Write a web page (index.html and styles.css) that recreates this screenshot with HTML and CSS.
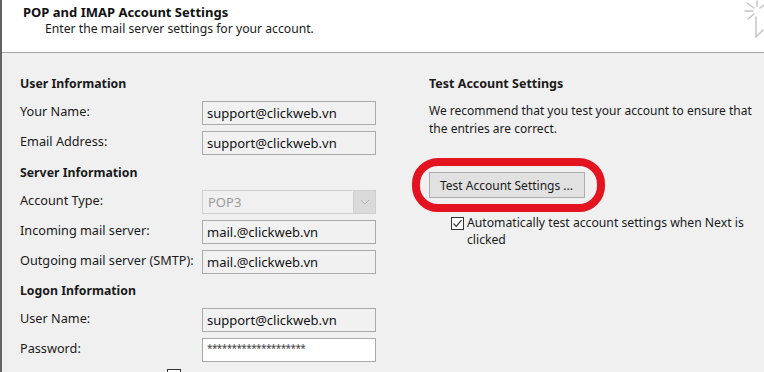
FILE: index.html
```html
<!DOCTYPE html>
<html>
<head>
<meta charset="utf-8">
<link rel="stylesheet" href="styles.css">
</head>
<body>
<div class="window">
  <div class="header">
    <div class="title">POP and IMAP Account Settings</div>
    <div class="subtitle">Enter the mail server settings for your account.</div>
    <svg class="busy" width="24" height="40" viewBox="0 0 24 40">
      <g stroke="#c4c4c4" stroke-width="1.5" fill="none" stroke-linecap="round">
        <line x1="14" y1="8" x2="7" y2="3"/>
        <line x1="13" y1="11" x2="5" y2="11"/>
        <line x1="14" y1="14" x2="8" y2="19"/>
        <line x1="17" y1="6" x2="17" y2="1"/>
        <line x1="20" y1="8" x2="24" y2="5"/>
        <line x1="16" y1="17" x2="16" y2="37"/>
        <line x1="16" y1="37" x2="23" y2="30"/>
      </g>
    </svg>
  </div>
  <div class="content">
    <div class="left">
      <div class="section">User Information</div>
      <div class="row"><span class="label">Your Name:</span><span class="field">support@clickweb.vn</span></div>
      <div class="row"><span class="label">Email Address:</span><span class="field">support@clickweb.vn</span></div>
      <div class="section">Server Information</div>
      <div class="row"><span class="label">Account Type:</span><span class="field select"><span class="sel-text">POP3</span><span class="sel-btn"><svg width="10" height="6" viewBox="0 0 10 6"><path d="M1 1 L5 5 L9 1" stroke="#b4b4b4" stroke-width="1" fill="none"/></svg></span></span></div>
      <div class="row"><span class="label">Incoming mail server:</span><span class="field">mail.@clickweb.vn</span></div>
      <div class="row"><span class="label">Outgoing mail server (SMTP):</span><span class="field">mail.@clickweb.vn</span></div>
      <div class="section logon">Logon Information</div>
      <div class="row"><span class="label">User Name:</span><span class="field">support@clickweb.vn</span></div>
      <div class="row"><span class="label">Password:</span><span class="field pw">********************</span></div>
      <div class="remember"><span class="box"></span></div>
    </div>
    <div class="right">
      <div class="section">Test Account Settings</div>
      <p class="desc">We recommend that you test your account to ensure that the entries are correct.</p>
      <div class="btn-wrap"><span class="btn">Test Account Settings ...</span></div>
      <div class="check-row">
        <span class="check"><svg width="13" height="13" viewBox="0 0 13 13"><path d="M2.5 6.5 L5.2 9.3 L10.5 3.2" stroke="#333" stroke-width="1.2" fill="none"/></svg></span>
        <span class="check-text">Automatically test account settings when Next is clicked</span>
      </div>
    </div>
  </div>
</div>
</body>
</html>
```
FILE: styles.css
```css
html, body {
  margin: 0;
  padding: 0;
}
body {
  width: 764px;
  height: 372px;
  overflow: hidden;
  background: #f0f0f0;
  font-family: "Noto Sans", "Open Sans", sans-serif;
  font-size: 12.5px;
  color: #1a1a1a;
}
.window {
  height: 372px;
  border-left: 2px solid #626262;
  box-sizing: border-box;
}
.header {
  position: relative;
  height: 52px;
  background: #ffffff;
  border-bottom: 1px solid #a5a5a5;
  box-sizing: content-box;
}
.title {
  padding: 3px 0 0 21px;
  font-weight: bold;
  font-size: 13px;
  line-height: 18px;
  color: #111;
}
.subtitle {
  padding-left: 43px;
  font-size: 12.2px;
  line-height: 16px;
}
.busy {
  position: absolute;
  right: 0;
  top: 0;
}
.content {
  display: flex;
  padding-top: 22px;
}
.left {
  margin-left: 18px;
  width: 356px;
}
.section {
  font-weight: bold;
  font-size: 12.3px;
  line-height: 18px;
  height: 18px;
  margin: 9px 0 8px;
}
.section.logon {
  margin-top: 8px;
}
.left .section:first-child,
.right .section:first-child {
  margin-top: 0;
}
.right .section {
  font-size: 12.5px;
}
.row {
  display: grid;
  grid-template-columns: 182px 174px;
  align-items: center;
  height: 24px;
  margin-bottom: 6px;
}
.label {
  position: relative;
  top: -2px;
  font-size: 12.7px;
}
.field {
  display: flex;
  align-items: center;
  box-sizing: border-box;
  height: 24px;
  border: 1px solid #a9a9a9;
  background: #f1f1f1;
  padding-left: 4px;
  font-size: 13px;
  color: #111;
}
.field.pw {
  background: #ffffff;
  font-size: 10px;
  letter-spacing: -0.6px;
  color: #444;
  align-items: center;
  padding-bottom: 4px;
}
.field.select {
  border-color: #cfcfcf;
  padding-left: 0;
  justify-content: space-between;
  align-items: stretch;
  background: #f0f0f0;
}
.sel-text {
  display: flex;
  align-items: center;
  padding-left: 5px;
  color: #9c9c9c;
}
.sel-btn {
  width: 21px;
  display: flex;
  align-items: center;
  justify-content: center;
  background: #dadada;
  border-left: 1px solid #cfcfcf;
}
.remember {
  padding-left: 147px;
  margin-top: 7px;
}
.remember .box {
  display: block;
  width: 12px;
  height: 12px;
  border: 1px solid #333;
  background: #fff;
}
.right {
  margin-left: 53px;
  flex: 1;
}
.desc {
  margin: 9px 0 0;
  font-size: 12px;
  line-height: 18px;
}
.btn-wrap {
  position: relative;
  display: inline-block;
  margin-top: 34px;
}
.btn {
  display: flex;
  align-items: center;
  box-sizing: border-box;
  height: 26px;
  width: 156px;
  padding-left: 10px;
  background: #e1e1e1;
  border: 1px solid #adadad;
  font-size: 12px;
}
.btn-wrap::after {
  content: "";
  position: absolute;
  top: -14px;
  bottom: -14px;
  left: -17px;
  right: -20px;
  border: 8px solid #e3141f;
  border-radius: 26px;
}
.check-row {
  display: flex;
  align-items: flex-start;
  margin-top: 16px;
  padding-left: 22px;
}
.check {
  flex: none;
  width: 13px;
  height: 13px;
  box-sizing: border-box;
  border: 1px solid #333;
  background: #fff;
  margin-top: 3px;
  margin-right: 3px;
  display: flex;
}
.check svg {
  margin: -1px;
}
.check-text {
  font-size: 12.2px;
  line-height: 17px;
  width: 290px;
}
```
